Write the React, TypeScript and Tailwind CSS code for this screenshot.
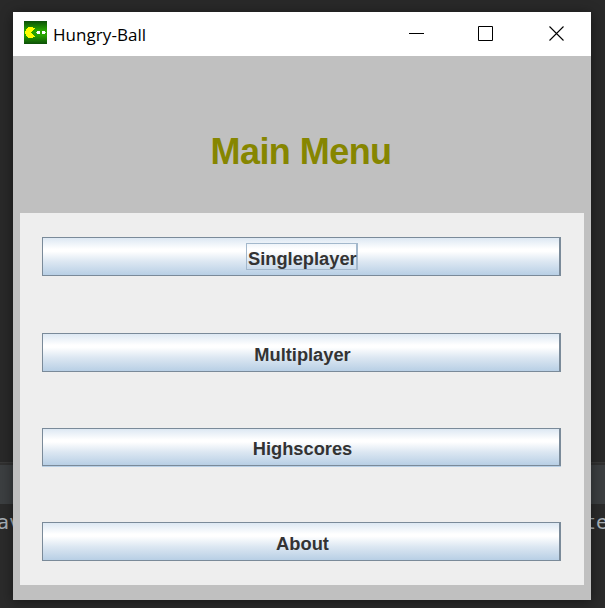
import React from "react";

type MenuItem = { label: string; frame: string; text: string; focused?: boolean };

const items: MenuItem[] = [
  { label: "Singleplayer", frame: "h-[39px]", text: "", focused: true },
  { label: "Multiplayer", frame: "mt-[57px] h-[39px]", text: "pt-[3px] pl-[3px]" },
  { label: "Highscores", frame: "mt-14 h-[38px] shadow-[0_1px_0_#b8cfe5]", text: "pt-0.5 pl-[3px]" },
  { label: "About", frame: "mt-14 h-[39px]", text: "pt-[3px] pl-[3px]" },
];

function GameIcon() {
  return (
    <svg width="23" height="23" viewBox="0 0 23 23" shapeRendering="crispEdges">
      <defs>
        <linearGradient id="field" x1="0" y1="0" x2="0" y2="1">
          <stop offset="0" stopColor="#0c4f08" />
          <stop offset="0.4" stopColor="#27a300" />
          <stop offset="0.62" stopColor="#27a300" />
          <stop offset="1" stopColor="#0c4f08" />
        </linearGradient>
      </defs>
      <rect width="23" height="23" fill="url(#field)" />
      <path d="M4 6h5v1h2v1h-1v1h-1v1h-1v1h-1v1h1v1h1v1h1v1h1v1h-2v1H4v-1H3v-1H2v-2H1v-3h1V8h1V7h1z" fill="#ffff00" />
      <path d="M13 10h3v3h-3zM18 10h3v3h-3z" fill="#fff" />
      <path d="M12 11h1v1h-1zM21 11h1v1h-1z" fill="#c8e8c0" />
    </svg>
  );
}

function TitleBar() {
  return (
    <header className="flex h-11 shrink-0 items-start bg-white text-black">
      <div className="ml-[11px] mt-[9px]">
        <GameIcon />
      </div>
      <span className="ml-1.5 mt-[11px] font-['Open_Sans','Noto_Sans',sans-serif] text-[17px] leading-6 tracking-[0.06px]">
        Hungry-Ball
      </span>
      <div className="ml-auto mr-[26px] mt-[14px] flex">
        <svg width="16" height="16" viewBox="0 0 16 16" className="mr-[53px]">
          <path d="M0 7.5h15" stroke="#000" />
        </svg>
        <svg width="16" height="16" viewBox="0 0 16 16" className="mr-[55px]">
          <path d="M.5 .5h14v14H.5z" fill="none" stroke="#000" />
        </svg>
        <svg width="16" height="16" viewBox="0 0 16 16">
          <path d="M0.5 .5l14 14M14.5 .5l-14 14" stroke="#000" strokeWidth="1.1" />
        </svg>
      </div>
    </header>
  );
}

function MenuButton({ item }: { item: MenuItem }) {
  return (
    <button
      className={`flex w-full shrink-0 justify-center border border-r-2 border-[#7a8a99] bg-[linear-gradient(#dde8f3_0%,#ffffff_30%,#ffffff_36%,#dce7f2_64%,#b8cfe5_100%)] font-['Liberation_Sans',Arial,sans-serif] text-[18.3px] font-bold text-[#333] ${item.frame}`}
    >
      {item.focused ? (
        <span className="ml-0.5 mt-[5px] block h-[27px] w-[112px] border border-r-2 border-[#a3b8cc] pl-px pt-0.5 text-left leading-[25px]">
          {item.label}
        </span>
      ) : (
        <span className={`block leading-[35px] ${item.text}`}>{item.label}</span>
      )}
    </button>
  );
}

export default function App() {
  return (
    <div className="relative h-[608px] w-[605px] overflow-hidden bg-[#2b2b2b]">
      <div className="flex h-full flex-col font-['DejaVu_Sans_Mono',monospace] text-[20px] text-[#a9b1b8]">
        <div className="h-[462px] shrink-0 bg-[#292929]" />
        <div className="h-[3px] shrink-0 border-t border-[#393939] bg-[#303030]" />
        <div className="h-[39px] shrink-0 bg-[#3c3f41]" />
        <div className="flex justify-between pt-1.5 leading-6">
          <span className="-ml-[3px]">av</span>
          <span className="-mr-[3px]">te</span>
        </div>
      </div>
      <main className="absolute left-[13px] top-3 flex h-[588px] w-[578px] flex-col bg-[#c0c0c0] shadow-[0_2px_12px_rgba(0,0,0,0.45)]">
        <TitleBar />
        <div className="flex h-[157px] shrink-0 justify-center pr-0.5 pt-[75px]">
          <h1 className="font-['Liberation_Sans',Arial,sans-serif] text-[36px] font-bold leading-[42px] tracking-[-0.55px] text-[#868600]">
            Main Menu
          </h1>
        </div>
        <section className="mx-[7px] flex h-[372px] flex-col bg-[#eeeeee] pl-[22px] pr-[23px] pt-6">
          {items.map((item) => (
            <MenuButton key={item.label} item={item} />
          ))}
        </section>
      </main>
    </div>
  );
}
